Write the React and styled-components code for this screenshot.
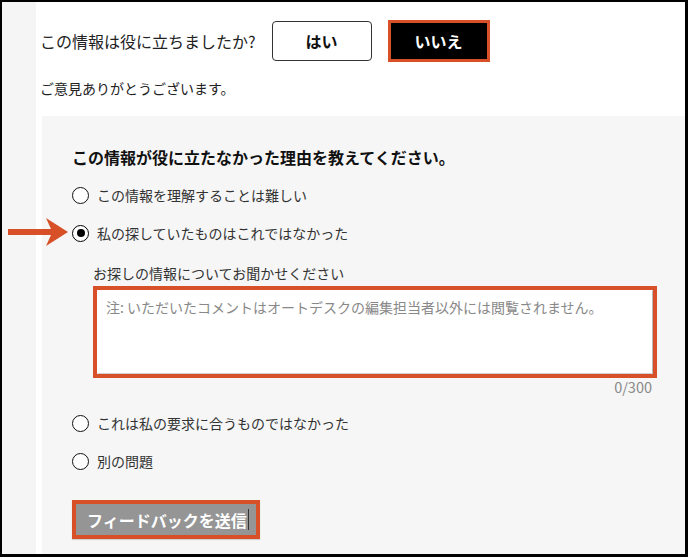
import React from "react";
import styled, { createGlobalStyle } from "styled-components";

const ORANGE = "#d85027";
const FONT = `"Noto Sans CJK JP", "Noto Sans", sans-serif`;

const Global = createGlobalStyle`
  html, body { margin: 0; padding: 0; background: #fff; }
  body { font-family: ${FONT}; }
  * { box-sizing: border-box; }
`;

const Frame = styled.div`
  position: relative;
  width: 688px;
  height: 557px;
  border-style: solid;
  border-color: #000;
  border-width: 2px 3px 3px 2px;
  display: flex;
  background: #fff;
  overflow: hidden;
`;

const Sidebar = styled.div`
  width: 34px;
  flex: none;
  background: #f5f5f5;
`;

const Content = styled.div`
  flex: 1;
  display: flex;
  flex-direction: column;
  background: #fff;
`;

const TopRow = styled.div`
  display: flex;
  align-items: center;
  height: 42px;
  margin-top: 18px;
  padding-left: 4px;
`;

const Question = styled.span`
  font-size: 16px;
  line-height: 22px;
  color: #222;
  margin-right: 16px;
`;

const VoteButton = styled.button`
  font-family: ${FONT};
  font-weight: 700;
  font-size: 16px;
  display: flex;
  align-items: center;
  justify-content: center;
  padding: 0;
  cursor: pointer;
  width: ${(p) => (p.$active ? "102px" : "100px")};
  height: ${(p) => (p.$active ? "42px" : "40px")};
  margin-left: ${(p) => (p.$active ? "16px" : "0")};
  background: ${(p) => (p.$active ? "#000" : "#fff")};
  color: ${(p) => (p.$active ? "#fff" : "#111")};
  border: ${(p) => (p.$active ? `3px solid ${ORANGE}` : "1px solid #333")};
  border-radius: ${(p) => (p.$active ? "0" : "4px")};
`;

const Thanks = styled.p`
  margin: 16px 0 0 4px;
  font-size: 14px;
  line-height: 20px;
  color: #222;
`;

const Panel = styled.section`
  flex: 1;
  margin: 18px 0 0 6px;
  background: #f6f6f6;
  padding: 30px 0 15px 30px;
  display: flex;
  flex-direction: column;
  align-items: flex-start;
`;

const Heading = styled.h2`
  margin: 0;
  font-size: 16px;
  font-weight: 700;
  line-height: 22px;
  color: #111;
`;

const Option = styled.label`
  display: flex;
  align-items: center;
  gap: 8px;
  height: 24px;
  margin-top: ${(p) => p.$mt}px;
  font-size: 14px;
  color: #333;
  cursor: pointer;
`;

const Radio = styled.span`
  position: relative;
  width: 17px;
  height: 17px;
  flex: none;
  border-radius: 50%;
  background: #fff;
  border: ${(p) => (p.$checked ? "1.7px solid #000" : "1.5px solid #111")};
  &::after {
    content: "";
    display: ${(p) => (p.$checked ? "block" : "none")};
    position: absolute;
    left: 50%;
    top: 50%;
    width: 8px;
    height: 8px;
    margin: -4px 0 0 -4px;
    border-radius: 50%;
    background: #000;
  }
`;

const Detail = styled.div`
  margin: 18px 0 0 21px;
  width: 564px;
  display: flex;
  flex-direction: column;
`;

const DetailLabel = styled.div`
  font-size: 14px;
  line-height: 20px;
  color: #333;
`;

const Highlight = styled.div`
  margin-top: 3px;
  border: 4px solid ${ORANGE};
  height: 92px;
`;

const TextArea = styled.textarea`
  display: block;
  width: 100%;
  height: 100%;
  resize: none;
  outline: none;
  border: 1px solid;
  border-color: #fff #b8b8b8 #d0d0d0 #fff;
  background: #fff;
  padding: 6px 8px;
  font-family: ${FONT};
  font-size: 14px;
  line-height: 20px;
  color: #333;
  &::placeholder { color: #888; opacity: 1; }
`;

const Counter = styled.div`
  text-align: right;
  padding-right: 5px;
  font-size: 14.5px;
  line-height: 18px;
  color: #888;
`;

const Submit = styled.button`
  margin-top: 27px;
  height: 39px;
  display: inline-flex;
  align-items: center;
  padding: 0 7px 0 11px;
  border: 4px solid ${ORANGE};
  background: #959595;
  color: #fff;
  font-family: ${FONT};
  font-size: 16px;
  font-weight: 700;
  cursor: pointer;
  box-shadow: 0 1px 1px rgba(0,0,0,0.15);
`;

const Caret = styled.span`
  display: inline-block;
  width: 1px;
  height: 21px;
  margin-left: 1px;
  background: #333;
`;

const Arrow = styled.svg`
  position: absolute;
  left: 6px;
  top: 215px;
  width: 60px;
  height: 30px;
`;

export default function App() {
  return (
    <>
      <Global />
      <Frame>
        <Sidebar />
        <Content>
          <TopRow>
            <Question>この情報は役に立ちましたか?</Question>
            <VoteButton>はい</VoteButton>
            <VoteButton $active>いいえ</VoteButton>
          </TopRow>
          <Thanks>ご意見ありがとうございます。</Thanks>
          <Panel>
            <Heading>この情報が役に立たなかった理由を教えてください。</Heading>
            <Option $mt={15}>
              <Radio />
              この情報を理解することは難しい
            </Option>
            <Option $mt={14}>
              <Radio $checked />
              私の探していたものはこれではなかった
            </Option>
            <Detail>
              <DetailLabel>お探しの情報についてお聞かせください</DetailLabel>
              <Highlight>
                <TextArea placeholder="注: いただいたコメントはオートデスクの編集担当者以外には閲覧されません。" />
              </Highlight>
              <Counter>0/300</Counter>
            </Detail>
            <Option $mt={15}>
              <Radio />
              これは私の要求に合うものではなかった
            </Option>
            <Option $mt={14}>
              <Radio />
              別の問題
            </Option>
            <Submit>
              フィードバックを送信
              <Caret />
            </Submit>
          </Panel>
        </Content>
        <Arrow viewBox="0 0 60 30">
          <polygon
            points="0,12 43,12 38,1 60,15 38,29 43,18 0,18"
            fill={ORANGE}
          />
        </Arrow>
      </Frame>
    </>
  );
}
